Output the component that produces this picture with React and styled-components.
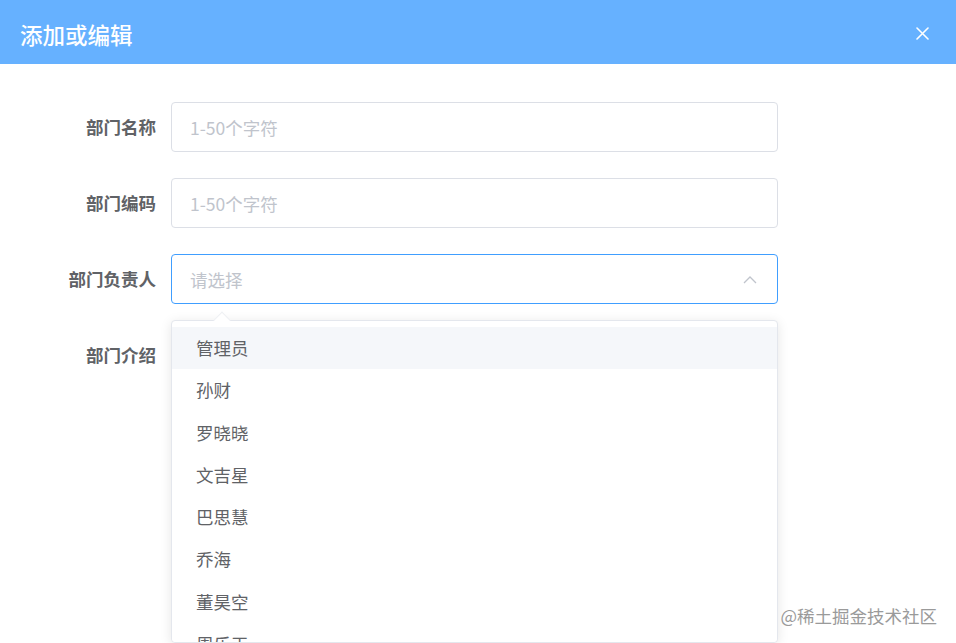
import React from "react";
import styled, { createGlobalStyle } from "styled-components";

const Global = createGlobalStyle`
  html, body { margin: 0; padding: 0; background: #fff; }
  body { font-family: "Noto Sans CJK SC", "Noto Sans", sans-serif; overflow: hidden; }
  * { box-sizing: border-box; }
`;

const Page = styled.div`
  width: 956px;
  height: 643px;
  position: relative;
  overflow: hidden;
  background: #fff;
`;

const Header = styled.div`
  height: 64px;
  background: #66b1ff;
  display: flex;
  align-items: center;
  justify-content: space-between;
  padding: 0 27px 0 20px;
`;

const Title = styled.h2`
  margin: 0;
  font-size: 22.5px;
  font-weight: 500;
  color: #fff;
  line-height: 1;
  transform: translateY(2px);
`;

const CloseBtn = styled.button`
  border: 0;
  background: transparent;
  padding: 0;
  width: 14px;
  height: 14px;
  display: flex;
  align-items: center;
  justify-content: center;
  transform: translateY(1px);
`;

const Form = styled.div`
  display: flex;
  flex-direction: column;
  gap: 26px;
  padding-top: 38px;
`;

const Row = styled.div`
  display: grid;
  grid-template-columns: 171px 607px;
  align-items: center;
  height: 50px;
  position: relative;
`;

const Label = styled.label`
  text-align: right;
  padding-right: 15px;
  font-size: 17.5px;
  font-weight: 700;
  color: #606266;
  line-height: 50px;
`;

const InputBox = styled.div`
  height: 50px;
  border: 1px solid ${(p) => (p.$focus ? "#409eff" : "#dcdfe6")};
  border-radius: 4px;
  display: flex;
  align-items: center;
  justify-content: space-between;
  padding: 0 20px 0 18px;
  background: #fff;
`;

const Placeholder = styled.span`
  font-size: 17.5px;
  color: #c0c4cc;
`;

const Dropdown = styled.div`
  position: absolute;
  left: 171px;
  top: 66px;
  width: 607px;
  height: 323px;
  background: #fff;
  border: 1px solid #e4e7ed;
  border-radius: 4px;
  box-shadow: 0 2px 12px rgba(0, 0, 0, 0.1);
  z-index: 5;
`;

const Arrow = styled.div`
  position: absolute;
  top: -7px;
  left: 44px;
  width: 12px;
  height: 12px;
  background: #fff;
  border-top: 1px solid #eef0f3;
  border-left: 1px solid #eef0f3;
  transform: rotate(45deg);
`;

const List = styled.ul`
  list-style: none;
  margin: 0;
  padding: 6px 0 0;
  height: 100%;
  overflow: hidden;
  position: relative;
  border-radius: 4px;
`;

const Item = styled.li`
  height: 42.3px;
  line-height: 42.3px;
  padding-left: 24px;
  font-size: 17.5px;
  color: #606266;
  background: ${(p) => (p.$hover ? "#f5f7fa" : "#fff")};
`;

const Watermark = styled.div`
  position: absolute;
  right: 19px;
  bottom: 19px;
  font-size: 17.5px;
  color: #9a9a9a;
  text-shadow: 0 0 2px #fff;
  z-index: 10;
  line-height: 1;
`;

const names = ["管理员", "孙财", "罗晓晓", "文吉星", "巴思慧", "乔海", "董昊空", "周乐天"];

export default function App() {
  return (
    <Page>
      <Global />
      <Header>
        <Title>添加或编辑</Title>
        <CloseBtn aria-label="close">
          <svg width="13" height="13" viewBox="0 0 13 13">
            <path d="M1 1L12 12M12 1L1 12" stroke="#fff" strokeWidth="1.6" strokeLinecap="round" />
          </svg>
        </CloseBtn>
      </Header>
      <Form>
        <Row>
          <Label>部门名称</Label>
          <InputBox>
            <Placeholder>1-50个字符</Placeholder>
          </InputBox>
        </Row>
        <Row>
          <Label>部门编码</Label>
          <InputBox>
            <Placeholder>1-50个字符</Placeholder>
          </InputBox>
        </Row>
        <Row>
          <Label>部门负责人</Label>
          <InputBox $focus>
            <Placeholder>请选择</Placeholder>
            <svg width="14" height="9" viewBox="0 0 14 9">
              <path d="M1 8L7 2L13 8" fill="none" stroke="#c0c4cc" strokeWidth="1.3" />
            </svg>
          </InputBox>
          <Dropdown>
            <Arrow />
            <List>
              {names.map((n, i) => (
                <Item key={n} $hover={i === 0}>{n}</Item>
              ))}
            </List>
          </Dropdown>
        </Row>
        <Row>
          <Label>部门介绍</Label>
          <div />
        </Row>
      </Form>
      <Watermark>@稀土掘金技术社区</Watermark>
    </Page>
  );
}
